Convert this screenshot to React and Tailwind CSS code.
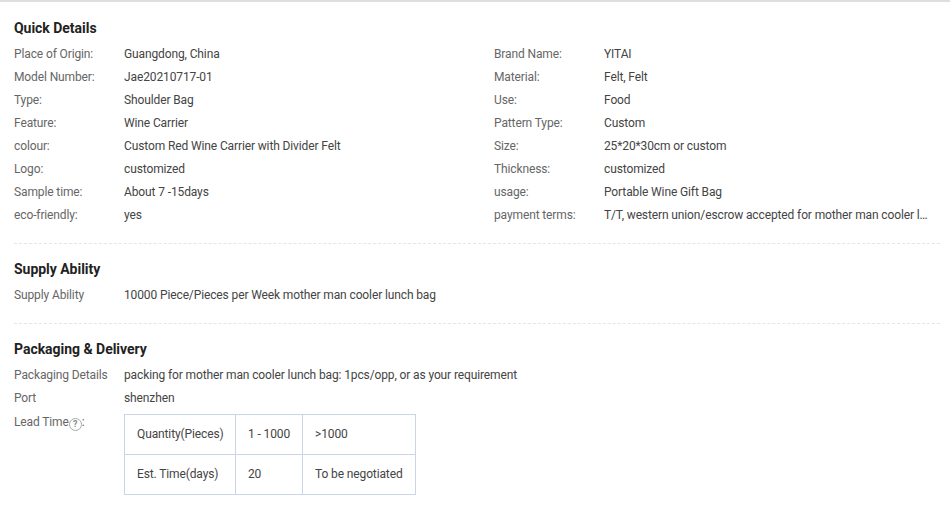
const quickDetails = [
  ['Place of Origin:', 'Guangdong, China', 'Brand Name:', 'YITAI'],
  ['Model Number:', 'Jae20210717-01', 'Material:', 'Felt, Felt'],
  ['Type:', 'Shoulder Bag', 'Use:', 'Food'],
  ['Feature:', 'Wine Carrier', 'Pattern Type:', 'Custom'],
  ['colour:', 'Custom Red Wine Carrier with Divider Felt', 'Size:', '25*20*30cm or custom'],
  ['Logo:', 'customized', 'Thickness:', 'customized'],
  ['Sample time:', 'About 7 -15days', 'usage:', 'Portable Wine Gift Bag'],
  ['eco-friendly:', 'yes', 'payment terms:', 'T/T, western union/escrow accepted for mother man cooler lunch bag'],
];

const Row = ({ label, value }) => (
  <div className="flex h-[23px] items-start pt-[3px] leading-4">
    <div className="w-[110px] shrink-0 text-[#666]">{label}</div>
    <div className="min-w-0 flex-1 truncate text-[#444]">{value}</div>
  </div>
);

const Heading = ({ children }) => (
  <h3 className="mb-[5px] h-5 text-sm leading-5 font-bold tracking-[-0.03px] text-[#222]">{children}</h3>
);

export default function App() {
  return (
    <div className="min-h-[513px] bg-white font-['Roboto',sans-serif] text-xs tracking-[-0.12px]">
      <div className="h-0.5 bg-[#dedede]" />
      <div className="pt-px pr-[10px] pl-[14px]">
        {/* Quick Details */}
        <section className="border-b border-dashed border-[#e5e5e5] pt-[15px] pb-4">
          <Heading>Quick Details</Heading>
          <div className="grid grid-cols-[480px_minmax(0,1fr)]">
            {quickDetails.map(([l1, v1, l2, v2]) => (
              <div key={l1} className="contents">
                <Row label={l1} value={v1} />
                <div className="min-w-0 pr-[12px]">
                  <Row label={l2} value={v2} />
                </div>
              </div>
            ))}
          </div>
        </section>

        {/* Supply Ability */}
        <section className="border-b border-dashed border-[#e5e5e5] pt-[15px] pb-4">
          <Heading>Supply Ability</Heading>
          <Row label="Supply Ability" value="10000 Piece/Pieces per Week mother man cooler lunch bag" />
        </section>

        {/* Packaging & Delivery */}
        <section className="pt-[15px]">
          <Heading>Packaging &amp; Delivery</Heading>
          <Row label="Packaging Details" value="packing for mother man cooler lunch bag: 1pcs/opp, or as your requirement" />
          <Row label="Port" value="shenzhen" />
          <div className="mt-1 flex">
            <div className="flex h-4 w-[110px] shrink-0 items-center text-[#666]">
              Lead Time
              <span className="mt-1 flex size-[13px] items-center justify-center rounded-full border border-[#aaa] text-[9px] leading-none font-bold text-[#888]">?</span>
              :
            </div>
            <table className="w-[292px] table-fixed border-collapse text-[#444]">
              <colgroup>
                <col className="w-[111px]" />
                <col className="w-[67px]" />
                <col />
              </colgroup>
              <tbody>
                <tr className="h-10">
                  <td className="border border-[#c9d4e5] pb-0.5 pl-3">Quantity(Pieces)</td>
                  <td className="border border-[#c9d4e5] pb-0.5 pl-3">1 - 1000</td>
                  <td className="border border-[#c9d4e5] pb-0.5 pl-3">&gt;1000</td>
                </tr>
                <tr className="h-10">
                  <td className="border border-[#c9d4e5] pb-0.5 pl-3">Est. Time(days)</td>
                  <td className="border border-[#c9d4e5] pb-0.5 pl-3">20</td>
                  <td className="border border-[#c9d4e5] pb-0.5 pl-3">To be negotiated</td>
                </tr>
              </tbody>
            </table>
          </div>
        </section>
      </div>
    </div>
  );
}
